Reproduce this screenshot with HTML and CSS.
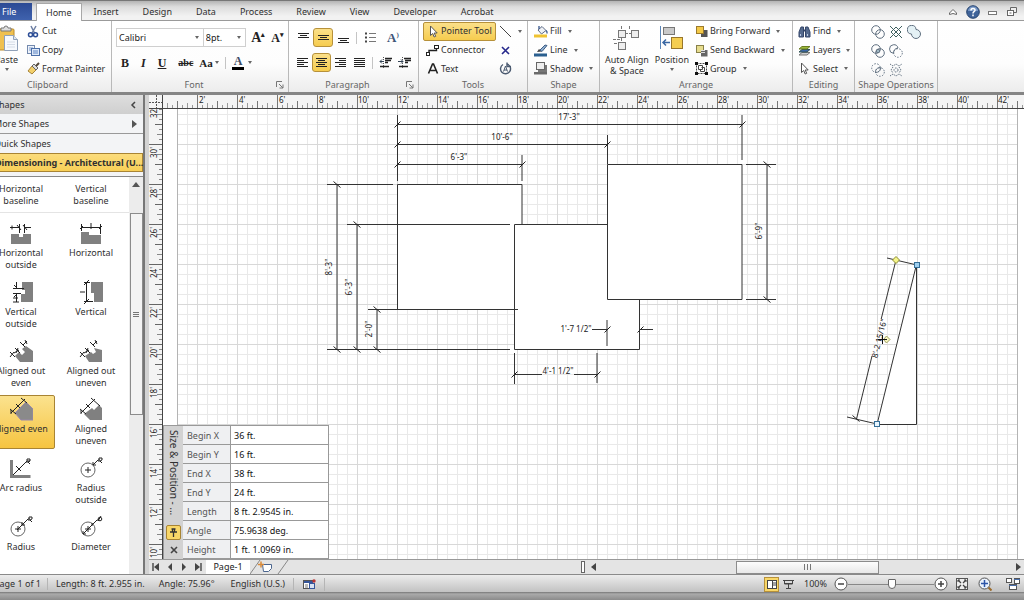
FILE: index.html
```html
<!DOCTYPE html>
<html lang="en">
<head>
<meta charset="utf-8">
<title>Drawing - Dimensioning</title>
<link rel="stylesheet" href="styles.css">
</head>
<body>
<div class="app">
  <header class="tabbar">
    <button class="tab file">File</button>
    <button class="tab active">Home</button>
    <button class="tab">Insert</button>
    <button class="tab">Design</button>
    <button class="tab">Data</button>
    <button class="tab">Process</button>
    <button class="tab">Review</button>
    <button class="tab">View</button>
    <button class="tab">Developer</button>
    <button class="tab">Acrobat</button>
    <div class="winctl">
      <button aria-label="Minimize ribbon"><svg width="10" height="10"><path d="M1.500 7.500V6L5 2.500 8.500 6v1.500L5 6.500z" fill="#fff" stroke="#666"/></svg></button>
      <button aria-label="Help"><svg width="14" height="14"><circle cx="7" cy="7" r="6.300" fill="#3f6399" stroke="#27446f"/><path d="M2 6a5 4.500 0 0 1 10 0z" fill="#7c9bc8"/><path d="M5 5.500C5 3 9 3 9 5.200 9 6.800 7 6.600 7 8.400M7 9.600v1.600" fill="none" stroke="#fff" stroke-width="1.500"/></svg></button>
      <button aria-label="Minimize"><svg width="10" height="10"><rect x=".5" y="4.500" width="8" height="3" fill="#fff" stroke="#777"/></svg></button>
      <button aria-label="Restore"><svg width="12" height="12"><path d="M4.500 4V1.500h6v5H8" fill="#eee" stroke="#666"/><rect x="1.500" y="4.500" width="6" height="5" fill="#fff" stroke="#666"/><path d="M3.500 7h2" stroke="#666"/></svg></button>
    </div>
  </header>

  <section class="ribbon">
    <div class="group clipboard">
      <div class="body">
        <button class="big paste"><svg width="24" height="28"><rect x="2" y="4" width="17" height="21" rx="1" fill="#efc04f" stroke="#b98a2b"/><path d="M6 6V3h3a2 2 0 0 1 4 0h3v3z" fill="#ddd" stroke="#777"/><path d="M9.500 10.500h9l4 4v11h-13z" fill="#f6f9fd" stroke="#8fa0b8"/><path d="M18.500 10.500v4h4" fill="#dbe5f2" stroke="#8fa0b8"/><path d="M12 17h8M12 19.500h8M12 22h8" stroke="#d5dce6"/></svg><span>Paste</span><i class="caret"></i></button>
        <div class="stack">
          <button class="cmd"><svg width="13" height="13"><path d="M4 1l3.500 7M9 1L5 8" stroke="#6d7fa3" stroke-width="1.500"/><circle cx="3.500" cy="9.800" r="2" fill="none" stroke="#2c4d96" stroke-width="1.500"/><circle cx="8.500" cy="9.800" r="2" fill="none" stroke="#2c4d96" stroke-width="1.500"/></svg>Cut</button>
          <button class="cmd"><svg width="13" height="13"><rect x=".5" y="1.500" width="7" height="8" fill="#eef3fb" stroke="#7389ad"/><path d="M2 4h4M2 6h3" stroke="#7d9bcd"/><rect x="4.500" y="4.500" width="8" height="7" fill="#dfe9f8" stroke="#4c6fa8"/><path d="M6 7h5M6 9h5" stroke="#5e86c4"/></svg>Copy</button>
          <button class="cmd"><svg width="13" height="13"><path d="M1 9l4-5 4 4-4 4z" fill="#f3d06b" stroke="#a7843a"/><path d="M5 4l2-2 4 4-2 2z" fill="#ddd" stroke="#666"/><path d="M9 4l3-3" stroke="#54483a" stroke-width="2"/></svg>Format Painter</button>
        </div>
      </div>
      <div class="caption"><span>Clipboard</span></div>
    </div>

    <div class="group font">
      <div class="body rows">
        <div class="row">
          <label class="combo face"><select aria-label="Font"><option>Calibri</option></select></label>
          <label class="combo size"><select aria-label="Font size"><option>8pt.</option></select></label>
          <button class="glyph serif grow">A<sup>▴</sup></button>
          <button class="glyph serif shrink">A<sup>▾</sup></button>
        </div>
        <div class="row marks">
          <button class="glyph serif b">B</button>
          <button class="glyph serif i">I</button>
          <button class="glyph serif u">U</button>
          <button class="glyph serif s">abc</button>
          <button class="glyph serif aa">Aa<i class="caret"></i></button>
          <i class="sep"></i>
          <button class="glyph serif color"><b>A</b><i class="caret"></i></button>
        </div>
      </div>
      <div class="caption"><span>Font</span><button class="launch" aria-label="Font settings"><svg width="8" height="8"><path d="M.5 6V.5H6M3 3l4 4M7 3.500V7H3.500" fill="none" stroke="#777"/></svg></button></div>
    </div>

    <div class="group para">
      <div class="body rows">
        <div class="row">
          <button class="ib" aria-label="Top"><svg width="13" height="13"><path d="M1 2.500h11M3 4.500h7M1 6.500h11" stroke="#222"/></svg></button>
          <button class="ib on" aria-label="Middle"><svg width="13" height="13"><path d="M1 4.500h11M3 6.500h7M1 8.500h11" stroke="#222"/></svg></button>
          <button class="ib" aria-label="Bottom"><svg width="13" height="13"><path d="M1 7.500h11M3 9.500h7M1 11.500h11" stroke="#222"/></svg></button>
          <i class="sep"></i>
          <button class="ib" aria-label="Bullets"><svg width="13" height="13"><path d="M1 2.500h2M1 6.500h2M1 10.500h2" stroke="#444" stroke-width="2"/><path d="M5 2.500h7M5 6.500h7M5 10.500h7" stroke="#777"/></svg></button>
          <button class="glyph serif rotate">A<sup>)</sup></button>
        </div>
        <div class="row">
          <button class="ib" aria-label="Left"><svg width="13" height="13"><path d="M1 2.500h11M1 4.500h7M1 6.500h11M1 8.500h7M1 10.500h11" stroke="#222"/></svg></button>
          <button class="ib on" aria-label="Center"><svg width="13" height="13"><path d="M1 2.500h11M3 4.500h7M1 6.500h11M3 8.500h7M1 10.500h11" stroke="#222"/></svg></button>
          <button class="ib" aria-label="Right"><svg width="13" height="13"><path d="M1 2.500h11M5 4.500h7M1 6.500h11M5 8.500h7M1 10.500h11" stroke="#222"/></svg></button>
          <button class="ib" aria-label="Justify"><svg width="13" height="13"><path d="M1 2.500h11M1 4.500h11M1 6.500h11M1 8.500h11M1 10.500h11" stroke="#222"/></svg></button>
          <i class="sep"></i>
          <button class="ib" aria-label="Decrease indent"><svg width="13" height="13"><path d="M6 2.500h7M6 4.500h6M6 6.500h3M1 10.500h9" stroke="#222" stroke-width="1.500"/><path d="M4.500 1v11" stroke="#555" stroke-dasharray="1 1"/><path d="M5 5.500H1M3 3.500L1 5.500l2 2" stroke="#345" fill="none"/></svg></button>
          <button class="ib" aria-label="Increase indent"><svg width="13" height="13"><path d="M6 2.500h7M7 4.500h6M7 6.500h3M1 10.500h9" stroke="#222" stroke-width="1.500"/><path d="M4.500 1v11" stroke="#555" stroke-dasharray="1 1"/><path d="M0 5.500h5M3 3.500l2 2-2 2" stroke="#345" fill="none"/></svg></button>
        </div>
      </div>
      <div class="caption"><span>Paragraph</span><button class="launch" aria-label="Paragraph settings"><svg width="8" height="8"><path d="M.5 6V.5H6M3 3l4 4M7 3.500V7H3.500" fill="none" stroke="#777"/></svg></button></div>
    </div>

    <div class="group tools">
      <div class="body">
        <div class="stack">
          <button class="cmd on"><svg width="13" height="13"><path d="M4.500 1v9.500l2.200-2 1.500 3.500 1.500-.7-1.500-3.300h3z" fill="#fff" stroke="#555"/></svg>Pointer Tool</button>
          <button class="cmd"><svg width="13" height="13"><rect x=".5" y="8.500" width="3" height="3" fill="#fff" stroke="#222"/><rect x="8.500" y="1.500" width="4" height="3" fill="#fff" stroke="#222"/><path d="M3 8V6.500h7.500V4" fill="none" stroke="#222" stroke-width="1.400"/></svg>Connector</button>
          <button class="cmd"><svg width="13" height="13"><path d="M2.500 11.500L6.500 2h1l4 9.500M4.500 8.500h5" fill="none" stroke="#222" stroke-width="1.600"/></svg>Text</button>
        </div>
        <div class="stack">
          <button class="cmd" aria-label="Line"><svg width="13" height="13"><path d="M1 1l11 11" stroke="#444"/></svg><i class="caret"></i></button>
          <button class="cmd" aria-label="Connection point"><svg width="13" height="13"><path d="M3 3l7 7M10 3l-7 7" stroke="#26288c" stroke-width="1.600"/></svg></button>
          <button class="cmd" aria-label="Text block"><svg width="13" height="13"><path d="M8.500 2.200a5 5 0 1 1-4.500.3M8 .5v4h4" fill="none" stroke="#4b5a70" stroke-width="1.400"/><path d="M4.500 9.500L6.500 4l2 5.500M5 8h3" fill="none" stroke="#4b5a70"/></svg></button>
        </div>
      </div>
      <div class="caption"><span>Tools</span></div>
    </div>

    <div class="group shape">
      <div class="body"><div class="stack">
        <button class="cmd"><svg width="14" height="13"><path d="M4 5l4-3.500 4 4L7.500 9z" fill="#eef1f6" stroke="#5b6a85"/><path d="M5 4V1M12 5.500c1.500 1 1 2 1 3" fill="none" stroke="#35548b" stroke-width="1.300"/><rect y="9.500" width="13" height="3" fill="#f0c332"/></svg>Fill<i class="caret"></i></button>
        <button class="cmd"><svg width="14" height="13"><path d="M3 8l2-3 3 2.500z" fill="#444"/><path d="M6 6l5-5 2 .5-5 6z" fill="#8faed0" stroke="#3f5f86"/><rect y="9.500" width="13" height="3" fill="#2a5f8f"/></svg>Line<i class="caret"></i></button>
        <button class="cmd"><svg width="14" height="13"><path d="M4 3h9v7H4z" fill="#777"/><rect x="2.500" y=".5" width="8" height="7" fill="#eee" stroke="#666"/><rect y="10" width="13" height="2.500" fill="#6a6a6a"/></svg>Shadow<i class="caret"></i></button>
      </div></div>
      <div class="caption"><span>Shape</span></div>
    </div>

    <div class="group arrange">
      <div class="body">
        <button class="big"><svg width="28" height="28"><g fill="#eee" stroke="#777"><path d="M12 8.500h6M8.500 13v5M0 14.500h8M8.500 1v4M16.500 1v4M1 18.500h4" stroke-dasharray="3 1"/><rect x="5.500" y="5.500" width="7" height="7"/><rect x="18.500" y="5.500" width="7" height="7"/><rect x="5.500" y="17.500" width="7" height="7"/></g></svg><span>Auto Align<br>&amp; Space</span></button>
        <button class="big"><svg width="28" height="28"><path d="M2.500 1v23" stroke="#5b86b8"/><rect x="5.500" y="2.500" width="11" height="7" fill="#c9c9c9" stroke="#777"/><rect x="13.500" y="12.500" width="11" height="11" fill="#f4cd50" stroke="#98762a"/><path d="M12 17.500H5M8 14.500l-3 3 3 3" fill="none" stroke="#3a67a3" stroke-width="1.500"/></svg><span>Position</span><i class="caret"></i></button>
        <div class="stack">
          <button class="cmd"><svg width="13" height="13"><rect x="6" y="5" width="6.500" height="7" fill="#555"/><rect x="1.500" y="1.500" width="7" height="7" fill="#f3c948" stroke="#9b7a2d"/></svg>Bring Forward<i class="caret"></i></button>
          <button class="cmd"><svg width="13" height="13"><rect x="1.500" y="1.500" width="7" height="7" fill="#e6dc8e" stroke="#88804a"/><rect x="6" y="6" width="6.500" height="6.500" fill="#666"/><path d="M6 6.500h4M6 8.500h4" stroke="#ddd"/></svg>Send Backward<i class="caret"></i></button>
          <button class="cmd"><svg width="13" height="13"><path d="M1.500 1.500h10v10h-10z" fill="none" stroke="#444" stroke-dasharray="2 1"/><path d="M3.500 3.500h4v4h-4zM6.500 5.500h3v4h-4v-2" fill="#fff" stroke="#444"/><path d="M0 0h3v3H0zM10 0h3v3h-3zM0 10h3v3H0zM10 10h3v3h-3z" fill="#111"/></svg>Group<i class="caret"></i></button>
        </div>
      </div>
      <div class="caption"><span>Arrange</span></div>
    </div>

    <div class="group editing">
      <div class="body"><div class="stack">
        <button class="cmd"><svg width="13" height="13"><path d="M1 12V7l2-5h2.500v10zM7.500 12V2H10l2 5v5z" fill="#54698c" stroke="#35476a"/><path d="M5 5.500h3" stroke="#35476a" stroke-width="2"/><path d="M2.500 9v2M9.500 9v2" stroke="#b9c9e4"/></svg>Find<i class="caret"></i></button>
        <button class="cmd"><svg width="13" height="13"><path d="M1 11l3-2.500h8L9 11z" fill="#cfcfcf" stroke="#777"/><path d="M1 8l3-2.500h8L9 8z" fill="#3c66a8" stroke="#355"/><path d="M1 5l3-2.500h8L9 5z" fill="#9dbb3c" stroke="#6b7d25"/></svg>Layers<i class="caret"></i></button>
        <button class="cmd"><svg width="13" height="13"><path d="M3.500 1v9.500l2.200-2 1.500 3.500 1.500-.7-1.500-3.300h3z" fill="#fff" stroke="#555"/></svg>Select<i class="caret"></i></button>
      </div></div>
      <div class="caption"><span>Editing</span></div>
    </div>

    <div class="group ops">
      <div class="body opgrid">
        <button aria-label="Union"><svg width="14" height="14"><g fill="none" stroke="#607080"><circle cx="5" cy="5" r="4.300"/><circle cx="9" cy="9" r="4.300"/></g></svg></button>
        <button aria-label="Fragment"><svg width="14" height="14"><path d="M1 1l12 12M13 1L1 13M7 2l5 5-5 5-5-5z" fill="none" stroke="#3f6060"/></svg></button>
        <button aria-label="Combine"><svg width="14" height="14"><path d="M9 4.500A4.300 4.300 0 1 0 4.500 9 4.500 4.500 0 1 0 9 4.500z" fill="#e4f1f5" stroke="#607080"/></svg></button>
        <button aria-label="Intersect"><svg width="14" height="14"><g fill="none" stroke="#607080"><circle cx="5" cy="5" r="4.300"/><circle cx="9" cy="9" r="4.300"/><circle cx="7" cy="7" r="1.800" fill="#9fb8c4"/></g></svg></button>
        <button aria-label="Subtract"><svg width="14" height="14"><g fill="none" stroke="#607080"><path d="M9 4A4.300 4.300 0 1 0 4.500 9.300C4.500 6 6 4.500 9 4z"/><circle cx="9" cy="9" r="4.300" stroke-dasharray="1.500 1.500"/></g></svg></button>
        <span></span>
        <button aria-label="Trim"><svg width="14" height="14"><g fill="none" stroke="#607080"><circle cx="5" cy="5" r="4.300" stroke-dasharray="1.500 1.500"/><circle cx="9" cy="9" r="4.300" stroke-dasharray="1.500 1.500"/><path d="M4.500 9.500c-.5-3 2-5 5-5 .5 3-2 5-5 5z"/></g></svg></button>
        <button aria-label="Offset"><svg width="14" height="14"><g fill="none" stroke="#607080" stroke-dasharray="1.500 1"><path d="M1 1l3 2 3-2 3 2 3-2M1 13l3-2 3 2 3-2 3 2"/><path d="M4 4L2 7l2 3M10 4l2 3-2 3"/><circle cx="7" cy="7" r="2"/></g></svg></button>
      </div>
      <div class="caption"><span>Shape Operations</span></div>
    </div>
  </section>

  <main class="workspace">
    <aside class="shapes">
      <div class="shead"><span>Shapes</span><button aria-label="Collapse"><svg width="6" height="8"><path d="M5 1L2 4l3 3" fill="none" stroke="#444" stroke-width="1.500"/></svg></button></div>
      <button class="sline more">More Shapes<svg width="6" height="8"><path d="M1 0l5 4-5 4z" fill="#555"/></svg></button>
      <button class="sline">Quick Shapes</button>
      <button class="sline stencil">Dimensioning - Architectural (U...</button>
      <div class="slist">
        <div class="sitems">
          <div class="recent"><button>Horizontal<br>baseline</button><button>Vertical<br>baseline</button></div>
          <div class="masters">
            <button><svg width="24" height="24"><path d="M2 13h8v3h4v-3h8v10H2z" fill="#808080"/><path d="M10.500 3v9M15.500 3v9M1 6.500h9M16 6.500h6M3 4.500v4M8 4l4 5M14 4l4 5" stroke="#222" fill="none"/></svg>Horizontal<br>outside</button>
            <button><svg width="24" height="24"><path d="M2 11h8v3h12v9H2z" fill="#808080"/><path d="M2.500 3v7M21.500 3v10M2 6.500h19M1 8l3-3M20 8l3-3M12 2v6" stroke="#222"/></svg>Horizontal</button>
            <button><svg width="24" height="24"><path d="M13 2h11v20H12v-8h4v-4h-3z" fill="#808080"/><path d="M4 8.500h11M4 13.500h8M7.500 2v6M7.500 14v8M5 5l4 4M5 17l4-4M4 18h5M4 22h6" stroke="#222"/></svg>Vertical<br>outside</button>
            <button><svg width="24" height="24"><path d="M12 2h12v20H15v-9h-3z" fill="#808080"/><path d="M5 2.500h6M5 21.500h9M7.500 2v20M5 5l5-5M5 24l5-5M1 12h5" stroke="#222"/></svg>Vertical</button>
            <button><svg width="24" height="24"><path d="M6 17l4-4 3 3 3-3-3-3 4-3 7 5v11H11z" fill="#808080"/><path d="M1 13l5 5M1 18l4-5M6 9l5 5M7 14l2-5M11 3l5 5M16 1l2 4M5 14l5-3M14 6l4-4" stroke="#222"/></svg>Aligned out<br>even</button>
            <button><svg width="24" height="24"><path d="M6 17l6-4 2 2 3-2-2-4 8 2v12H10z" fill="#808080"/><path d="M1 13l5 5M1 18l4-5M6 9l5 5M7 14l2-5M11 3l5 5M16 1l2 4M5 14l5-3M14 6l4-4" stroke="#222"/></svg>Aligned out<br>uneven</button>
            <button class="sel"><svg width="24" height="24"><path d="M6 16L17 5l7 7v11H12z" fill="#8a8a8a" stroke="#98a"/><path d="M1 12l6 5M12 1l6 5M2 16L16 2M2 13v4M7 7l4 4" stroke="#222" fill="none"/></svg>Aligned even</button>
            <button><svg width="24" height="24"><path d="M5 17l8-6 2 2 5-5 3 3v12H11z" fill="#808080"/><path d="M1 12l6 5M12 1l9 8M2 16L16 2M2 13v4M7 7l4 4" stroke="#222" fill="none"/></svg>Aligned<br>uneven</button>
            <button><svg width="24" height="24"><path d="M2.500 4v16.500h19" fill="none" stroke="#808080" stroke-width="3"/><path d="M4 19L18 5h3M7 10l5 5M18 7V3h3v2l-2 1 2 2" fill="none" stroke="#222"/></svg>Arc radius</button>
            <button><svg width="24" height="24"><circle cx="9" cy="14" r="7" fill="none" stroke="#666"/><path d="M6 14h6M9 11v6M14 9l5-5h2M14 6v3h3M20 6V2h3v2l-2 1 2 2" fill="none" stroke="#222"/></svg>Radius<br>outside</button>
            <button><svg width="24" height="24"><circle cx="9" cy="14" r="7" fill="none" stroke="#666"/><path d="M6 14h6M9 11v6M8 15L19 4h2M13 7v3h3M20 6V2h3v2l-2 1 2 2" fill="none" stroke="#222"/></svg>Radius</button>
            <button><svg width="24" height="24"><circle cx="9" cy="14" r="7" fill="none" stroke="#666"/><path d="M6 14h6M9 11v6M4 19L18 5h2M4 16v3h3M13 8v3M22 1l-3 5" fill="none" stroke="#222"/><circle cx="21" cy="4" r="1.800" fill="none" stroke="#222"/></svg>Diameter</button>
          </div>
        </div>
        <div class="vscroll"><button aria-label="Scroll up"><svg width="8" height="5"><path d="M0 5l4-5 4 5z" fill="#555"/></svg></button><div class="thumb"></div></div>
      </div>
    </aside>

    <section class="doc">
      <svg class="corner"><path d="M7.500 0v14M0 7.500h14" stroke="#555" stroke-dasharray="2 1"/></svg>
      <svg class="ruler-h">
        <defs><pattern id="ht" patternUnits="userSpaceOnUse" x="-6" width="40" height="14"><path d="M.5 0v14M20.500 6v8" stroke="#777"/><path d="M10.500 8v6M30.500 8v6M5.500 10v4M15.500 10v4M25.500 10v4M35.500 10v4" stroke="#999"/></pattern></defs>
        <rect width="100%" height="14" fill="url(#ht)"/>
        <g class="rl"><text x="36" y="8">2'</text><text x="76" y="8">4'</text><text x="116" y="8">6'</text><text x="156" y="8">8'</text><text x="195" y="8">10'</text><text x="235" y="8">12'</text><text x="275" y="8">14'</text><text x="315" y="8">16'</text><text x="355" y="8">18'</text><text x="395" y="8">20'</text><text x="435" y="8">22'</text><text x="475" y="8">24'</text><text x="515" y="8">26'</text><text x="555" y="8">28'</text><text x="595" y="8">30'</text><text x="635" y="8">32'</text><text x="675" y="8">34'</text><text x="715" y="8">36'</text><text x="755" y="8">38'</text><text x="795" y="8">40'</text><text x="835" y="8">42'</text></g>
      </svg>
      <svg class="ruler-v">
        <defs><pattern id="vt" patternUnits="userSpaceOnUse" y="-5" width="14" height="40"><path d="M0 .5h14M6 20.500h8" stroke="#666"/><path d="M8 10.500h6M8 30.500h6M10 5.500h4M10 15.500h4M10 25.500h4M10 35.500h4" stroke="#888"/></pattern></defs>
        <rect width="14" height="100%" fill="url(#vt)"/>
        <g class="rl"><text transform="translate(8 9) rotate(-90)">32'</text><text transform="translate(8 49) rotate(-90)">30'</text><text transform="translate(8 89) rotate(-90)">28'</text><text transform="translate(8 129) rotate(-90)">26'</text><text transform="translate(8 169) rotate(-90)">24'</text><text transform="translate(8 209) rotate(-90)">22'</text><text transform="translate(8 249) rotate(-90)">20'</text><text transform="translate(8 289) rotate(-90)">18'</text><text transform="translate(8 329) rotate(-90)">16'</text><text transform="translate(8 369) rotate(-90)">14'</text><text transform="translate(8 409) rotate(-90)">12'</text><text transform="translate(8 449) rotate(-90)">10'</text></g>
      </svg>
      <div class="canvas">
        <svg class="drawing">
          <defs>
            <pattern id="grid" patternUnits="userSpaceOnUse" x="157" y="104" width="40" height="40"><path d="M10.500 0v40M20.500 0v40M30.500 0v40M0 10.500h40M0 20.500h40M0 30.500h40" stroke="#e9e9e9"/><path d="M.5 0v40M0 .5h40" stroke="#d8d8d8"/></pattern>
            <path id="t" d="M-2.500 3.500l6-6"/><path id="r" d="M-3.500-2.500l7 6"/>
          </defs>
          <g transform="translate(-163 -109)">
            <rect x="177" y="100" width="840" height="900" fill="url(#grid)"/>
            <path d="M177.500 100v900M1017.500 100v900" stroke="#b4b4b4"/>
            <g class="ln" fill="#fff">
              <path d="M397.500 184.500h124.500v125H397.500z"/>
              <path d="M514.500 224.500h125v125h-125z"/>
              <path d="M607.500 164.500h134.500v135h-134.500z"/>
              <path d="M877 424.500L916.500 264.500v160z"/>
            </g>
            <g class="ln" fill="none">
              <path d="M397.500 115v66M742 115v45M397 124.500h345M397 144.500h210M607.500 135v29M397 164.500h125M522 155v26"/>
              <path d="M327 184.500h66M347 224.500h163M368 309.500h150M327 349.500h183M337 184v165M357 224v125M377 309v40"/>
              <path d="M746 164.500h30M746 299.500h30M767 164v135"/>
              <path d="M592 329.500h15M607 320v26M640 329.500h13M514.500 353v31M597 353v30M514 374.500h28M574 374.500h23"/>
              <path d="M887 258l30 7M847 417l30 7M896 260l-14.800 59M872 356l-15.500 63"/>
            </g>
            <g class="tk"><use href="#t" x="397" y="124"/><use href="#t" x="742" y="124"/><use href="#t" x="397" y="144"/><use href="#t" x="607" y="144"/><use href="#t" x="397" y="164"/><use href="#t" x="522" y="164"/><use href="#r" x="337" y="184"/><use href="#r" x="357" y="224"/><use href="#r" x="377" y="309"/><use href="#r" x="337" y="349"/><use href="#r" x="357" y="349"/><use href="#r" x="377" y="349"/><use href="#r" x="767" y="164"/><use href="#r" x="767" y="299"/><use href="#t" x="607" y="329"/><use href="#t" x="640" y="329"/><use href="#t" x="514" y="374"/><use href="#t" x="597" y="374"/><use href="#r" x="856" y="418"/></g>
            <g class="dim">
              <text x="569" y="120">17'-3"</text><text x="502" y="140">10'-6"</text><text x="459" y="160">6'-3"</text>
              <text transform="translate(332 267) rotate(-90)">8'-3"</text><text transform="translate(352 287) rotate(-90)">6'-3"</text><text transform="translate(372 329) rotate(-90)">2'-0"</text><text transform="translate(762 231) rotate(-90)">6'-9"</text>
              <text x="576" y="332">1'-7 1/2"</text><text x="558" y="374">4'-1 1/2"</text>
              <text transform="translate(882 339) rotate(-76)">8'-2 15/16"</text>
            </g>
            <g stroke-width="1"><path d="M896 256.500l3.500 3.500-3.500 3.500-3.500-3.500z" fill="#f5f58a" stroke="#8c8c2e"/><path d="M886.500 336l3.500 3.500-3.500 3.500-3-3.500z" fill="#f7f7c0" stroke="#a0a060"/><path d="M878 339.500h9M882.500 335v9" stroke="#111"/><rect x="914.500" y="262.500" width="5" height="5" fill="#9fd0f0" stroke="#356f98"/><rect x="874.500" y="421.500" width="5" height="5" fill="#e8f6ff" stroke="#356f98"/></g>
          </g>
        </svg>
        <div class="sizepos">
          <div class="grip"><span>Size &amp; Position - ...</span>
            <button class="pin" aria-label="Pin"><svg width="9" height="9"><path d="M1 4h7M4.500 4v5M2.500 1h4M3.500 1v3M5.500 1v3" stroke="#333" stroke-width="1.300"/></svg></button>
            <button aria-label="Close"><svg width="8" height="8"><path d="M1 1l6 6M7 1L1 7" stroke="#444" stroke-width="1.600"/></svg></button></div>
          <div class="fields">
            <label for="bx">Begin X</label><input id="bx" value="36 ft.">
            <label for="by">Begin Y</label><input id="by" value="16 ft.">
            <label for="ex">End X</label><input id="ex" value="38 ft.">
            <label for="ey">End Y</label><input id="ey" value="24 ft.">
            <label for="ln">Length</label><input id="ln" value="8 ft. 2.9545 in.">
            <label for="an">Angle</label><input id="an" value="75.9638 deg.">
            <label for="hi">Height</label><input id="hi" value="1 ft. 1.0969 in.">
          </div>
        </div>
      </div>
      <div class="pagebar">
        <div class="pages">
          <button aria-label="First"><svg width="8" height="8"><path d="M1 0v8" stroke="#444" stroke-width="1.400"/><path d="M7 0v8L2 4z" fill="#444"/></svg></button>
          <button aria-label="Previous"><svg width="8" height="8"><path d="M6 0v8L2 4z" fill="#444"/></svg></button>
          <button aria-label="Next"><svg width="8" height="8"><path d="M2 0v8l4-4z" fill="#444"/></svg></button>
          <button aria-label="Last"><svg width="8" height="8"><path d="M7 0v8" stroke="#444" stroke-width="1.400"/><path d="M1 0v8l5-4z" fill="#444"/></svg></button>
          <button class="page">Page-1</button>
          <button class="newpage" aria-label="Insert page"><svg width="40" height="14"><path d="M0 14L10 0M28 14L38 0" stroke="#888"/><path d="M12.500 4.500h9v4l-3 3h-5z" fill="#fff" stroke="#4c668f"/><path d="M8 4.500h6M11 1.500v6" stroke="#d98b3a" stroke-width="1.500"/></svg></button>
        </div>
        <div class="hscroll">
          <i class="split"></i>
          <button aria-label="Scroll left"><svg width="5" height="8"><path d="M5 0v8L0 4z" fill="#444"/></svg></button>
          <div class="track"><div class="hthumb"></div></div>
          <button aria-label="Scroll right"><svg width="5" height="8"><path d="M0 0v8l5-4z" fill="#444"/></svg></button>
        </div>
      </div>
    </section>
  </main>

  <footer class="status">
    <span class="pg">Page 1 of 1</span><span class="len">Length: 8 ft. 2.955 in.</span><span class="ang">Angle: 75.96°</span><span class="lang">English (U.S.)</span>
    <span class="mac"><svg width="14" height="13"><rect x="1.500" y="2.500" width="9" height="8" fill="#fff" stroke="#555"/><path d="M2 4h9" stroke="#36569a" stroke-width="2"/><path d="M3 7h3M3 9h3" stroke="#777"/><rect x="7.500" y="5.500" width="5" height="5" fill="#d8e2f4" stroke="#36569a"/><circle cx="12" cy="3" r="1.700" fill="#b33"/></svg></span>
    <div class="zoom">
      <button class="on" aria-label="Normal view"><svg width="11" height="11"><rect x="1.500" y="1.500" width="9" height="8" fill="#fff" stroke="#444"/><path d="M6.500 2v8M7 4h3M7 6h3" stroke="#444"/></svg></button>
      <button class="full" aria-label="Full screen"><svg width="11" height="11"><path d="M0 1.500h11M2 4.500h7M1.500 2v3h8V2M5.500 5v4M3 9.500h5" fill="none" stroke="#444"/></svg></button>
      <button class="pct">100%</button>
      <button aria-label="Zoom out"><svg width="14" height="14"><circle cx="7" cy="7" r="6" fill="#fff" stroke="#555"/><path d="M4 7h6" stroke="#444" stroke-width="1.500"/></svg></button>
      <input type="range" min="0" max="100" value="51" aria-label="Zoom">
      <button aria-label="Zoom in"><svg width="14" height="14"><circle cx="7" cy="7" r="6" fill="#fff" stroke="#555"/><path d="M4 7h6M7 4v6" stroke="#444" stroke-width="1.500"/></svg></button>
      <button aria-label="Fit page"><svg width="14" height="14"><rect x="1.500" y="1.500" width="11" height="11" fill="#eee" stroke="#555"/><path d="M3 3l3 3M11 3L8 6M3 11l3-3M11 11L8 8" stroke="#444" stroke-width="1.300"/><path d="M3 5V3h2M9 3h2v2M3 9v2h2M9 11h2V9" fill="none" stroke="#444"/></svg></button>
      <button class="pan" aria-label="Pan and zoom"><svg width="14" height="14"><circle cx="6.500" cy="6.500" r="5.500" fill="#eaf1fc" stroke="#555"/><path d="M3 6.500h7M6.500 3v7" stroke="#2c55a8" stroke-width="1.500"/><path d="M10.500 10.500l3 3" stroke="#9b6a2a" stroke-width="2"/></svg></button>
      <button aria-label="Switch windows"><svg width="14" height="14"><g fill="#fff" stroke="#555"><rect x=".5" y="1.500" width="5" height="4"/><rect x="8.500" y="1.500" width="5" height="5"/><rect x="3.500" y="7.500" width="7" height="5"/></g><path d="M8 2.500h6M3 8.500h8" stroke="#4a6ea9"/></svg></button>
    </div>
  </footer>
</div>
</body>
</html>
```
FILE: styles.css
```css
* { box-sizing: border-box; }
body { margin: 0; overflow: hidden; font: 9px/12px "Noto Sans", "Open Sans", sans-serif; color: #303030; }
button, select, input { font: inherit; color: inherit; margin: 0; padding: 0; border: 0; background: none; }
button { display: flex; align-items: center; justify-content: center; white-space: nowrap; }
svg { flex: none; display: block; }
i { display: block; flex: none; }
/* The window hangs slightly over the left screen edge. */
.app { display: flex; flex-direction: column; height: 100vh; margin-left: -16px; }

.caret { width: 0; height: 0; border: 2px solid transparent; border-top: 3px solid #666; border-bottom: 0; margin-left: 4px; }
.sep { width: 1px; height: 12px; background: #c4c4c4; }

.tabbar { display: flex; flex: none; height: 21px; padding-top: 2px; border-top: 1px solid #777; border-bottom: 1px solid #9a9a9a; background: linear-gradient(#b4b4b4, #dcdcdc 30%, #f2f2f2 80%); }
.tab { padding: 0 12px; }
.tab.file { width: 48px; margin-right: 4px; color: #fff; justify-content: flex-start; padding-left: 18px; background: linear-gradient(#2c4a94, #3f62ae); }
.tab.active { padding: 0 9px; margin-bottom: -1px; border: 1px solid #a8a8a8; border-bottom: 0; background: #fff; }
.winctl { display: flex; gap: 8px; margin-left: auto; padding-right: 6px; }

.ribbon { display: flex; flex: none; height: 74px; background: linear-gradient(#fff, #fdfdfd 60%, #ececec); border-bottom: 3px solid #858585; }
.group { display: flex; flex-direction: column; flex: none; border-right: 1px solid #b9b9b9; }
.body { display: flex; height: 57px; padding-top: 1px; }
.caption { display: flex; height: 14px; align-items: center; color: #666; }
.caption span { flex: 1; text-align: center; }
.launch { margin-right: 4px; }
.stack { display: flex; flex-direction: column; }
.cmd { height: 19px; gap: 2px; padding: 0 2px; justify-content: flex-start; border: 1px solid transparent; border-radius: 2px; }
.cmd.on, .ib.on { background: linear-gradient(#fbe08a, #f6cc4e); border: 1px solid #b7913a; }
.big { flex-direction: column; justify-content: flex-start; padding: 3px 3px 0; }
.big .caret { margin: 3px 0 0; }
.big span { display: block; padding-top: 1px; line-height: 11px; }

.clipboard { width: 128px; }
.paste { width: 42px; padding-right: 0; }
.clipboard .cmd { padding: 0; }
.font { width: 177px; }
.rows { flex-direction: column; padding: 7px 4px 0; gap: 6px; }
.row { display: flex; align-items: center; height: 19px; }
.combo { position: relative; display: flex; height: 19px; border: 1px solid #cfcfcf; background: #fff; }
.combo + .combo { border-left: 0; }
.combo select { width: 100%; padding-left: 2px; appearance: none; color: #222; }
.combo::after { content: ""; position: absolute; right: 4px; top: 7px; border: 2px solid transparent; border-top: 3px solid #666; border-bottom: 0; }
.face { width: 89px; }
.size { width: 43px; }
.serif { font-family: "Liberation Serif", serif; font-size: 12px; font-weight: bold; color: #222; }
.serif sup { font-size: 7px; line-height: 7px; align-self: flex-start; }
.grow { font-size: 14px; margin-left: 5px; }
.shrink { margin-left: 6px; }
.marks { padding-left: 5px; gap: 12px; }
.i { font-style: italic; }
.u { text-decoration: underline; }
.s { font-size: 10px; text-decoration: line-through; margin-right: -6px; }
.aa { font-size: 11px; margin-right: -6px; }
.aa .caret { margin-left: 2px; }
.color { margin-left: -6px; }
.color b { line-height: 12px; padding: 0 2px; border-bottom: 3px solid #000; color: #3d4c66; }
.para { width: 130px; }
.para .row { gap: 0; }
.ib { width: 20px; height: 19px; border: 1px solid transparent; border-radius: 3px; }
.para .sep { margin: 0 3px; }
.rotate { margin-left: 7px; font-size: 13px; color: #3e5578; }
.tools { width: 109px; }
.tools .body { padding-left: 4px; gap: 0; }
.tools .stack:first-child { width: 73px; }
.shape { width: 72px; }
.shape .body { padding-left: 3px; }
.arrange { width: 193px; }
.arrange .body { padding-left: 2px; }
.arrange .cmd { padding-right: 0; }
.editing { width: 62px; }
.editing .body { padding-left: 2px; }
.ops { width: 83px; }
.opgrid { display: grid; grid-template-columns: repeat(3, 18px); grid-template-rows: repeat(3, 19px); justify-content: center; }

.workspace { display: flex; flex: 1; min-height: 0; background: #d3d3d3; }
.shapes { display: flex; flex-direction: column; flex: none; width: 161px; border-right: 2px solid #777; background: #f3f4f6; }
.shead { display: flex; flex: none; height: 19px; align-items: center; justify-content: space-between; padding: 0 7px 0 10px; background: linear-gradient(#dedede, #cfcfcf); }
.sline { flex: none; height: 19px; justify-content: flex-start; padding: 0 6px 0 10px; }
.more { height: 20px; justify-content: space-between; border-bottom: 1px solid #999; }
.stencil { font-weight: bold; border: 1px solid #a88434; background: linear-gradient(#fbdc7c, #f8cf57); padding-right: 0; }
.slist { display: flex; flex: 1; min-height: 0; margin-top: 4px; border-top: 1px solid #888; background: #fff; overflow: hidden; }
.sitems { display: flex; flex-direction: column; flex: 1; }
.recent, .masters { display: grid; grid-template-columns: 70px 70px; padding-left: 2px; line-height: 12px; }
.recent { height: 36px; border-bottom: 1px solid #e4e4e4; }
.masters { flex: 1; grid-auto-rows: 1fr; padding: 6px 0 2px 2px; }
.masters button { flex-direction: column; justify-content: flex-start; padding-top: 1px; height: 54px; border: 1px solid transparent; gap: 2px; }
.masters .sel { margin-right: 1px; border: 1px solid #a88434; border-radius: 2px; background: linear-gradient(#fbe28e, #f6c440); }
.vscroll { display: flex; flex-direction: column; align-items: center; width: 14px; background: #ececec; }
.vscroll button { width: 14px; height: 14px; }
.vscroll .thumb { width: 13px; height: 51%; margin-top: 22px; border: 1px solid #8c8c8c; background: linear-gradient(#777, #777) center 49%/6px 1px no-repeat, linear-gradient(#777, #777) center 50%/6px 1px no-repeat, linear-gradient(#777, #777) center 51%/6px 1px no-repeat, #f4f4f4; }

.doc { display: grid; flex: 1; min-width: 0; margin-left: 4px; grid-template: 14px 1fr 15px / 14px 1fr; background: #fff; }
.doc > svg { width: 100%; height: 100%; overflow: hidden; background: #f4f4f4; }
.doc > .ruler-h, .doc > .corner { border-bottom: 1px solid #444; }
.doc > .ruler-v, .doc > .corner { border-right: 1px solid #444; }
.rl { font-size: 8px; fill: #222; }
.canvas { position: relative; min-height: 0; overflow: hidden; }
.drawing { width: 100%; height: 100%; }
.ln { stroke: #333; stroke-width: 1; }
.tk { stroke: #222; stroke-width: 1; }
.dim { font-size: 8px; fill: #222; text-anchor: middle; }
.sizepos { position: absolute; left: 0; bottom: 0; display: flex; width: 166px; border: 1px solid #999; border-bottom: 0; background: #fff; }
.grip { display: flex; flex-direction: column; align-items: center; width: 19px; padding: 4px 0 2px; background: #d2d2d2; }
.grip span { flex: 1; writing-mode: vertical-rl; font-size: 10px; }
.grip button { width: 15px; height: 15px; margin-top: 2px; }
.grip .pin { border: 1px solid #a88434; border-radius: 2px; background: #f9d768; }
.fields { display: grid; flex: 1; grid-template-columns: 48px 1fr; grid-auto-rows: 19px; line-height: 19px; }
.fields label { padding-left: 4px; background: #eff0f2; border-right: 1px solid #999; border-bottom: 1px solid #999; color: #555; }
.fields input { min-width: 0; padding: 1px 0 0 3px; border-bottom: 1px solid #999; color: #111; }

.pagebar { grid-column: 1 / -1; display: flex; background: #e4e4e4; border-top: 1px solid #999; }
.pages { display: flex; flex: 433; }
.pages button { width: 14px; }
.pages .page { width: 44px; margin-left: 1px; background: #fff; color: #222; }
.pages .newpage { width: 40px; }
.hscroll { display: flex; flex: 442; align-items: center; gap: 6px; padding-right: 3px; }
.split { width: 4px; height: 12px; border: 1px solid #666; background: #fff; }
.track { flex: 1; height: 13px; }
.hthumb { width: 35%; height: 13px; margin-left: 33%; border: 1px solid #8c8c8c; background: repeating-linear-gradient(90deg, #777 0 1px, transparent 1px 3px) center/7px 6px no-repeat, linear-gradient(#fdfdfd, #e8e8e8); }

.status { display: flex; flex: none; align-items: center; height: 26px; padding: 1px 4px 8px 10px; border-top: 1px solid #8a8a8a; background: linear-gradient(#ececec, #c2c2c2 17px, #777 17px, #aaa 19px, #8b8b8b); }
.status > span { padding: 0 8px; border-right: 1px solid #b5b5b5; }
.status .pg { padding: 0 6px 0 0; }
.status .ang, .status .len { border: 0; }
.status .len { padding-right: 6px; }
.zoom { display: flex; align-items: center; gap: 7px; margin-left: auto; }
.zoom .on { width: 15px; height: 15px; border: 1px solid #b7913a; background: #f9d768; }
.zoom .full { margin-left: -3px; }
.zoom .pct { padding: 0 0 0 3px; }
.zoom input { appearance: none; width: 86px; height: 12px; margin: 0 -7px; background: linear-gradient(#888, #888) center/100% 1px no-repeat; }
.zoom input::-webkit-slider-thumb { appearance: none; width: 8px; height: 10px; border: 1px solid #666; border-radius: 1px 1px 4px 4px; background: #fff; }
.zoom .pan { margin: 0 7px 0 2px; }
```
